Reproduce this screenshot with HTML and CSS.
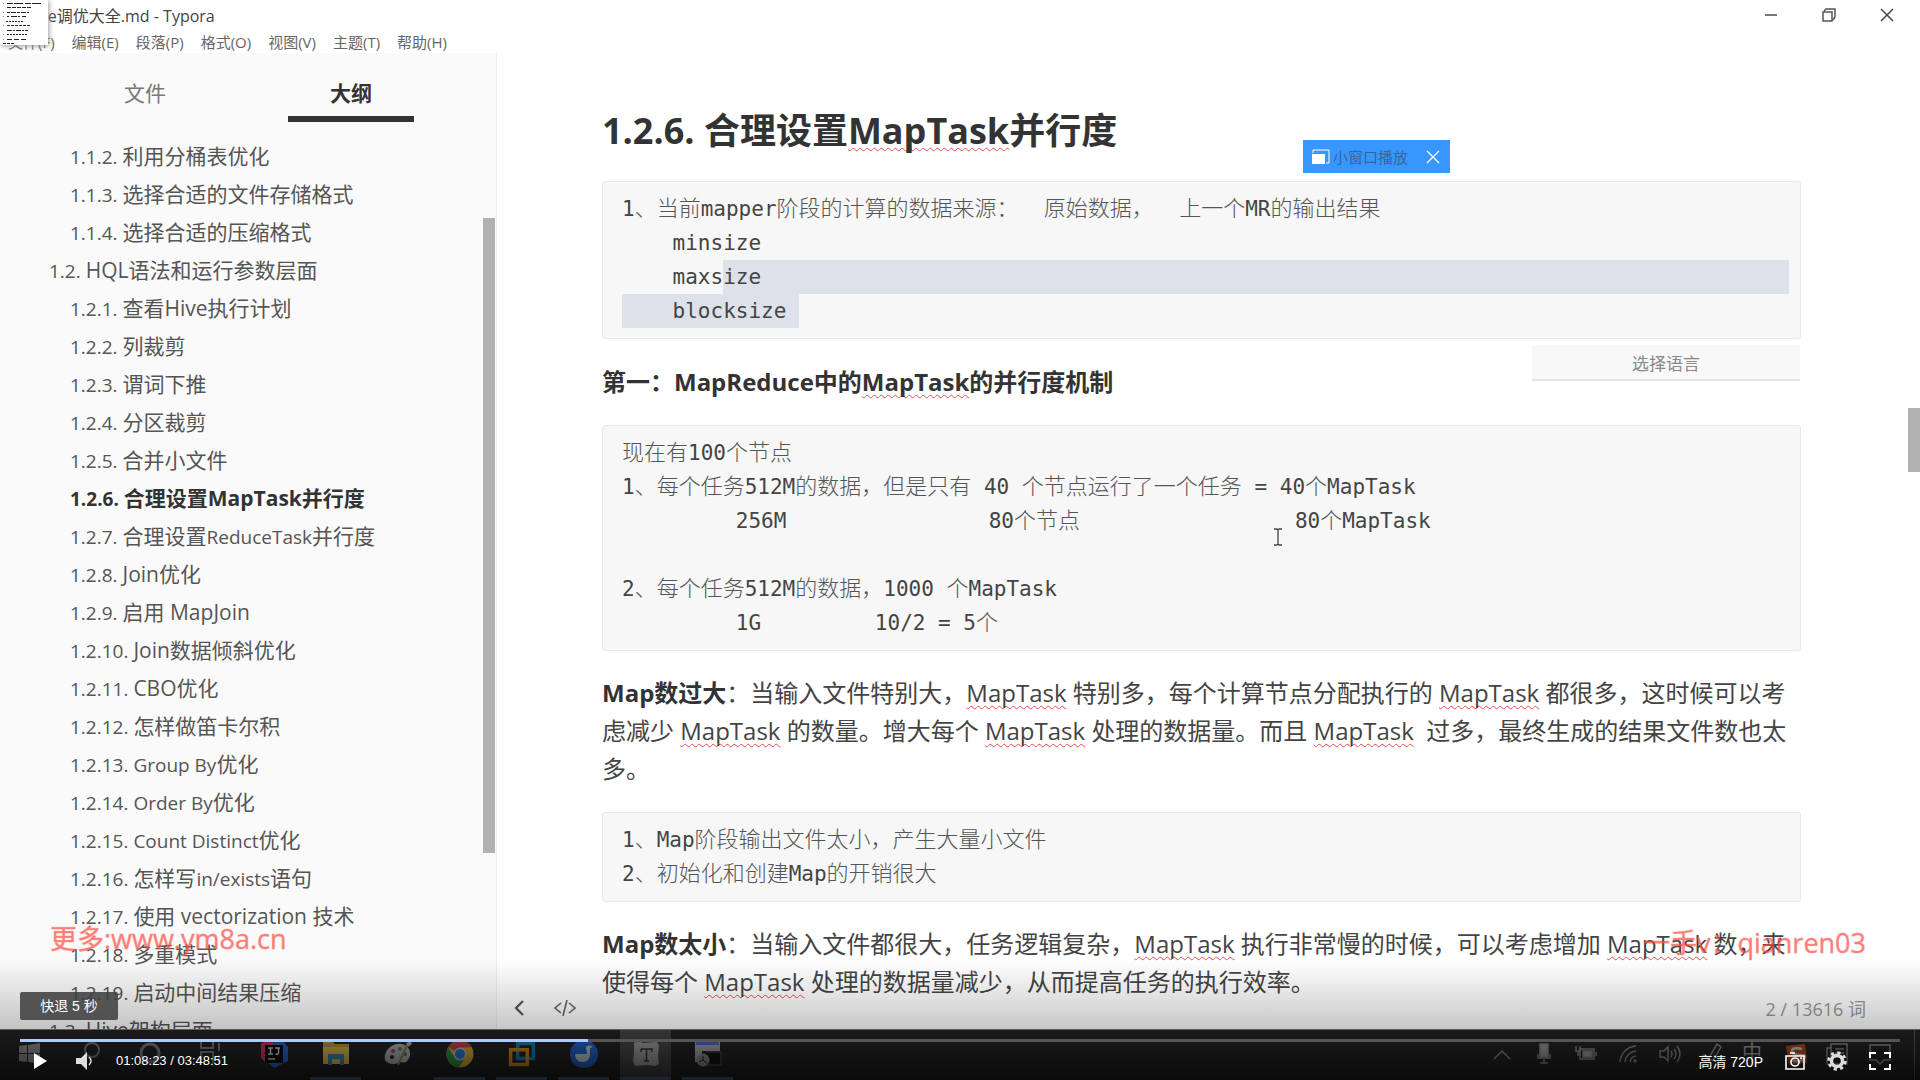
FILE: index.html
```
<!DOCTYPE html>
<html lang="zh-CN">
<head>
<meta charset="utf-8">
<title>Hive调优大全.md - Typora</title>
<link rel="stylesheet" href="styles.css">
</head>
<body>
<div class="player">
  <div class="app">
    <header class="titlebar">
      <h1 class="title">Hive调优大全.md - Typora</h1>
      <div class="winbtns">
        <button aria-label="最小化"><svg width="14" height="14"><path d="M1 7h12" stroke="#777" stroke-width="2"/></svg></button>
        <button aria-label="还原"><svg width="14" height="14" fill="none" stroke="#555" stroke-width="1.500"><path d="M1 4h9v9H1zM2 3l2-2h9v8l-2 3"/></svg></button>
        <button aria-label="关闭"><svg width="14" height="14"><path d="M1 1l12 12M13 1L1 13" stroke="#444" stroke-width="1.500"/></svg></button>
      </div>
    </header>
    <nav class="menubar">
      <button>文件(F)</button><button>编辑(E)</button><button>段落(P)</button><button>格式(O)</button><button>视图(V)</button><button>主题(T)</button><button>帮助(H)</button>
    </nav>
    <div class="workspace">
      <aside class="sidebar">
        <div class="tabs"><button class="tab">文件</button><button class="tab active"><span>大纲</span></button></div>
        <ul class="outline">
          <li><a href="#"><i>1.1.2. </i>利用分桶表优化</a></li>
          <li><a href="#"><i>1.1.3. </i>选择合适的文件存储格式</a></li>
          <li><a href="#"><i>1.1.4. </i>选择合适的压缩格式</a></li>
          <li class="lv2"><a href="#"><i>1.2. </i>HQL语法和运行参数层面</a></li>
          <li><a href="#"><i>1.2.1. </i>查看Hive执行计划</a></li>
          <li><a href="#"><i>1.2.2. </i>列裁剪</a></li>
          <li><a href="#"><i>1.2.3. </i>谓词下推</a></li>
          <li><a href="#"><i>1.2.4. </i>分区裁剪</a></li>
          <li><a href="#"><i>1.2.5. </i>合并小文件</a></li>
          <li class="current"><a href="#"><i>1.2.6. </i>合理设置MapTask并行度</a></li>
          <li><a href="#"><i>1.2.7. </i>合理设置<i>ReduceTask</i>并行度</a></li>
          <li><a href="#"><i>1.2.8. </i>Join优化</a></li>
          <li><a href="#"><i>1.2.9. </i>启用 MapJoin</a></li>
          <li><a href="#"><i>1.2.10. </i>Join数据倾斜优化</a></li>
          <li><a href="#"><i>1.2.11. </i>CBO优化</a></li>
          <li><a href="#"><i>1.2.12. </i>怎样做笛卡尔积</a></li>
          <li><a href="#"><i>1.2.13. </i><i>Group By</i>优化</a></li>
          <li><a href="#"><i>1.2.14. </i><i>Order By</i>优化</a></li>
          <li><a href="#"><i>1.2.15. </i><i>Count Distinct</i>优化</a></li>
          <li><a href="#"><i>1.2.16. </i>怎样写<i>in/exists</i>语句</a></li>
          <li><a href="#"><i>1.2.17. </i>使用 vectorization 技术</a></li>
          <li><a href="#"><i>1.2.18. </i>多重模式</a></li>
          <li><a href="#"><i>1.2.19. </i>启动中间结果压缩</a></li>
          <li class="lv2"><a href="#"><i>1.3. </i>Hive架构层面</a></li>
        </ul>
        <div class="side-thumb"></div>
      </aside>
      <main class="editor">
        <article class="doc">
          <h2>1.2.6. 合理设置<u>MapTask</u>并行度</h2>
          <div class="fence">
<pre><i>1</i>、当前<i>mapper</i>阶段的计算的数据来源：<i>  </i>原始数据，<i>  </i>上一个<i>MR</i>的输出结果</pre>
<pre><i>    minsize</i></pre>
<pre class="sel-rest"><i>    maxs</i><mark><i>ize</i></mark></pre>
<pre><mark class="sel"><i>    blocksize </i></mark></pre>
            <button class="lang">选择语言</button>
          </div>
          <h3>第一：MapReduce中的<u>MapTask</u>的并行度机制</h3>
          <div class="fence">
<pre>现在有<i>100</i>个节点</pre>
<pre><i>1</i>、每个任务<i>512M</i>的数据，但是只有<i> 40 </i>个节点运行了一个任务<i> = 40</i>个<i>MapTask</i></pre>
<pre><i>         256M                80</i>个节点<i>                 80</i>个<i>MapTask</i></pre>
<pre> </pre>
<pre><i>2</i>、每个任务<i>512M</i>的数据，<i>1000 </i>个<i>MapTask</i></pre>
<pre><i>         1G         10/2 = 5</i>个</pre>
            <svg class="ibeam" width="8" height="18" fill="none" stroke="#444" stroke-width="1.300"><path d="M0 1h3l1 1 1-1h3M4 2v14M0 17h3l1-1 1 1h3"/></svg>
          </div>
          <p><strong>Map数过大</strong>：当输入文件特别大，<u>MapTask</u> 特别多，每个计算节点分配执行的 <u>MapTask</u> 都很多，这时候可以考虑减少 <u>MapTask</u> 的数量。增大每个 <u>MapTask</u> 处理的数据量。而且 <u>MapTask</u>&nbsp; 过多，最终生成的结果文件数也太多。</p>
          <div class="fence">
<pre><i>1</i>、<i>Map</i>阶段输出文件太小，产生大量小文件</pre>
<pre><i>2</i>、初始化和创建<i>Map</i>的开销很大</pre>
          </div>
          <p><strong>Map数太小</strong>：当输入文件都很大，任务逻辑复杂，<u>MapTask</u> 执行非常慢的时候，可以考虑增加 <u>MapTask</u> 数，来使得每个 <u>MapTask</u> 处理的数据量减少，从而提高任务的执行效率。</p>
        </article>
        <div class="status">
          <button aria-label="收起侧栏"><svg width="10" height="16" fill="none" stroke="#555" stroke-width="2.200"><path d="M9 1L2 8l7 7"/></svg></button>
          <button aria-label="源代码模式"><svg width="22" height="16" fill="none" stroke="#666" stroke-width="1.600"><path d="M7 3L1 8l6 5M15 3l6 5-6 5M13 0L9 16"/></svg></button>
          <span class="count">2 / 13616 词</span>
        </div>
        <div class="main-thumb"></div>
      </main>
    </div>
    <footer class="taskbar">
      <div class="apps">
        <span class="app-ic"><svg viewBox="0 0 28 28"><path d="M7 6l8-1v8H7zM16 5l12-2v10H16zM7 14h8v8l-8-1zM16 14h12v10l-12-2z" fill="#888"/></svg></span>
        <span class="app-ic"><svg viewBox="0 0 28 28" fill="none" stroke="#777" stroke-width="2"><circle cx="18" cy="10" r="7"/><path d="M13 15l-7 8"/></svg></span>
        <span class="app-ic"><svg viewBox="0 0 28 28" fill="none" stroke="#777" stroke-width="3"><circle cx="14" cy="13" r="9"/></svg></span>
        <span class="app-ic"><svg viewBox="0 0 28 28" fill="none" stroke="#777" stroke-width="2"><path d="M3 2v6h12V2M3 23V12h12v11M21 3v8M21 15v8"/></svg></span>
        <span class="app-ic"><svg viewBox="0 0 28 28"><path d="M1 3l12-3 2 8L7 24l-6-6z" fill="#c5345c"/><path d="M15 2l8-1 5 6v14l-14 7-7-6z" fill="#2860c8"/><path d="M5 5h18v18H5z" fill="#0c0c12"/><path d="M8 8h5M10.500 8v6M8 14h5M15 8h5M18.500 8v5q0 2-3 1M8 19h7" stroke="#ccc" stroke-width="1.500" fill="none"/></svg></span>
        <span class="app-ic run"><svg viewBox="0 0 28 28"><path d="M1 1h9l3 3h14v20H1z" fill="#b8923a"/><path d="M1 7h26v17H1z" fill="#d8b450"/><path d="M6 25V14h16v11h-4v-6h-8v6z" fill="#3b82aa"/></svg></span>
        <span class="app-ic"><svg viewBox="0 0 28 28"><path d="M1 20C-1 11 8 2 18 4c8 2 11 11 5 17-3 3-6 0-9 2-4 2-11 1-13-3z" fill="#aaacae"/><circle cx="9" cy="11" r="2" fill="#9d4040"/><circle cx="16" cy="9" r="2" fill="#3e8542"/><circle cx="21" cy="14" r="2" fill="#346fa0"/><circle cx="8" cy="17" r="2" fill="#222"/><path d="M14 25L24 3" stroke="#9b7446" stroke-width="2"/><path d="M22 4l4-4 2 4-4 3z" fill="#aaa"/></svg></span>
        <span class="app-ic run"><svg viewBox="0 0 28 28"><circle cx="14" cy="14" r="13.500" fill="#d0a834"/><path d="M14 14L2.300 7.200A13.500 13.500 0 0 1 25.700 7.200L14 7.500z" fill="#c0453b"/><path d="M2.300 7.200A13.500 13.500 0 0 0 13 27.500l6-10-11-1z" fill="#2b8c46"/><circle cx="14" cy="14" r="6.500" fill="#bbb"/><circle cx="14" cy="14" r="5" fill="#3470cc"/></svg></span>
        <span class="app-ic run"><svg viewBox="0 0 32 28" fill="none" stroke-width="4"><path d="M11 2h18v17H11z" stroke="#1a7ba8"/><path d="M3 9h19v17H3z" stroke="#cc8224"/></svg></span>
        <span class="app-ic run"><svg viewBox="0 0 28 28"><circle cx="14" cy="14" r="14" fill="#235fc4"/><path d="M5 14h12l-1-7q2-3 7 0l-3 1v6c0 11-15 11-15 0z" fill="#b5c7c7"/></svg></span>
        <span class="app-ic run focus"><svg viewBox="0 0 28 28"><path d="M2 3l4-2 5 2 14-1 2 4-1 9 1 9-4 2-8-1-12 1-2-5 1-9z" fill="#999"/><path d="M9 9h11v3M9 9v3M14.500 9v12M12 21h5" stroke="#333" stroke-width="1.500" fill="none"/></svg></span>
        <span class="app-ic run"><svg viewBox="0 0 28 28"><path d="M1 1h25v10H8v11H1z" fill="#a0a0a8"/><path d="M2 2h23v3H2z" fill="#4c68b0"/><path d="M12 12h15v13H13" fill="#141414" stroke="#555"/><circle cx="9" cy="20" r="6.500" fill="#888"/><path d="M9 16v4l-4 2M9 20l4 3" stroke="#222" fill="none"/></svg></span>
      </div>
      <div class="tray">
        <svg viewBox="0 0 24 24"><path d="M4 17l8-8 8 8"/></svg>
        <svg viewBox="0 0 24 24"><path d="M8 2h8v13H8z" fill="#999"/><path d="M6 12v4h12v-4M12 17v4M8 21h8"/></svg>
        <svg viewBox="0 0 24 24"><path d="M6 7h14v10H6z"/><path d="M9 9h9v6H9z" fill="#999"/><path d="M22 10v4M2 4v5h4V4M4 9v5"/></svg>
        <svg viewBox="0 0 24 24"><path d="M4 20A17 17 0 0 1 20 4M9 20A12 12 0 0 1 20 9M14 20a7 7 0 0 1 6-6"/><circle cx="19" cy="19" r="1"/></svg>
        <svg viewBox="0 0 24 24"><path d="M2 9h4l4-4v14l-4-4H2zM13 9q2 3 0 6M16 7q4 5 0 10M19 4q6 8 0 16"/></svg>
        <svg viewBox="0 0 24 24"><path d="M10 14l7-12 4 3-7 12-5 2zM2 14q3-3 5 1t-4 5"/></svg>
        <span class="ime">中</span>
        <svg viewBox="0 0 24 24"><path d="M2 4l19-2 2 19-18 2z" fill="#b84820" stroke="none"/><path d="M18 7q-10-2-10 2t9 4-1 6q-5 1-8-1" stroke="#ccc" stroke-width="2.500"/></svg>
        <svg viewBox="0 0 24 24"><path d="M5 2h16v20H1V6h4zM5 6v14M9 7h9M9 11h9M9 15h9"/></svg>
        <svg viewBox="0 0 24 24"><path d="M2 3h20v15h-6l-4 4-4-4H2z"/></svg>
      </div>
    </footer>
  </div>

  <div class="thumb-drag" aria-hidden="true"><svg width="46" height="44" fill="none" stroke-width="1"><g stroke="#222"><path d="M7 3.500h34" stroke-dasharray="6 1 9 2"/><path d="M7 7.500h24" stroke-dasharray="4 1"/><path d="M7 12.500h22" stroke-dasharray="3 1 5 1"/><path d="M7 16.500h19" stroke-dasharray="2 2 6 1"/><path d="M6 21.500h18" stroke-dasharray="2 1"/><path d="M7 25.500h24" stroke-dasharray="3 1"/><path d="M7 30.500h21" stroke-dasharray="5 1 2 1"/><path d="M7 34.500h20" stroke-dasharray="2 1"/><path d="M7 39.500h20" stroke-dasharray="5 2"/><path d="M3 43.500h12" stroke-dasharray="3 1"/></g><path d="M3 3.500h1M3 12.500h1M3 16.500h1M3 25.500h1M3 34.500h1M3 39.500h1" stroke="#b85"/></svg></div>
  <div class="popout"><button class="pop-go"><svg width="18" height="15"><path d="M1 4V1h16v13h-3" fill="none" stroke="#fff"/><path d="M0 5h13v10H0z" fill="#fff"/></svg>小窗口播放</button><button class="pop-x" aria-label="关闭"><svg width="14" height="14"><path d="M1 1l12 12M13 1L1 13" stroke="#fff" stroke-width="1.300"/></svg></button></div>
  <div class="mark mark-l">更多:www.ym8a.cn</div>
  <div class="mark mark-r">一手v：qianren03</div>

  <div class="overlay">
    <div class="tip">快退 5 秒</div>
    <div class="track"><div class="played" style="width:30.2%"></div></div>
    <div class="controls">
      <button class="play" aria-label="播放"><svg width="13" height="16"><path d="M0 0l13 8-13 8z" fill="#fff"/></svg></button>
      <button aria-label="音量"><svg width="18" height="18"><path d="M0 6h5l6-6v18l-6-6H0z" fill="#ddd"/><path d="M13 5q4 4 0 8" stroke="#ddd" stroke-width="1.500" fill="none"/></svg></button>
      <span class="time">01:08:23 / 03:48:51</span>
      <span class="spacer"></span>
      <button class="quality">高清 720P</button>
      <button aria-label="截图"><svg width="20" height="18" fill="none" stroke="#fff" stroke-width="1.600"><path d="M1 4h18v13H1zM5 1h5"/><circle cx="10" cy="10" r="4"/><path d="M15 6h2"/></svg></button>
      <button aria-label="设置"><svg width="20" height="20" viewBox="0 0 20 20" fill="none" stroke="#ddd"><circle cx="10" cy="10" r="5.500" stroke-width="3.500"/><circle cx="10" cy="10" r="8.300" stroke-width="2.800" stroke-dasharray="3.260 3.260"/></svg></button>
      <button aria-label="全屏"><svg width="22" height="18" fill="none" stroke="#fff" stroke-width="2"><path d="M1 6V1h6M15 1h6v5M21 12v5h-6M7 17H1v-5"/></svg></button>
    </div>
  </div>
</div>
</body>
</html>
```
FILE: styles.css
```
* { box-sizing: border-box; }
body { margin: 0; background: #fff; color: #333; font-family: "Open Sans", "Noto Sans CJK SC", sans-serif; }
button { margin: 0; padding: 0; border: 0; background: none; color: inherit; font: inherit; }
i { font-style: normal; }
.player { position: relative; height: 100vh; overflow: hidden; }
.app { height: 100%; display: flex; flex-direction: column; }

.titlebar { display: flex; justify-content: space-between; align-items: center; height: 29px; padding: 0 24px 0 24px; color: #444; }
.title { margin: 0; font-size: 16px; font-weight: 400; }
.winbtns { display: flex; gap: 44px; padding-right: 2px; }
.winbtns button { display: flex; }
.menubar { display: flex; gap: 17px; height: 24px; padding-left: 8px; font-size: 15px; line-height: 26px; color: #666; }

.workspace { flex: 1; min-height: 0; display: flex; overflow: hidden; }
.sidebar { position: relative; width: 497px; flex: none; overflow: hidden; background: #fafafa; border-right: 1px solid #eee; font-size: 21px; color: #555; }
.tabs { display: flex; gap: 80px; padding-left: 82px; height: 84px; }
.tab { width: 126px; height: 69px; padding-top: 8px; color: #777; }
.tab.active { font-weight: 700; color: #333; border-bottom: 6px solid #333; padding-top: 14px; }
.outline { list-style: none; margin: 0; padding: 0 0 0 70px; }
.outline li { height: 38px; line-height: 38px; white-space: nowrap; }
.outline a { color: inherit; text-decoration: none; }
.outline i { font-size: 19px; white-space: pre; }
.outline .lv2 { margin-left: -21px; }
.outline .current { font-weight: 700; color: #333; }
.side-thumb { position: absolute; right: 1px; top: 165px; width: 12px; height: 635px; background: #b1b1b1; }

.editor { position: relative; flex: 1; min-width: 0; overflow: hidden; }
.doc { padding: 56px 119px 0 105px; font-size: 24px; line-height: 38px; color: #444; }
h2 { margin: 0 0 28px; font-size: 36px; line-height: 44px; color: #333; }
h3 { margin: 24px 0; font-size: 24px; line-height: 38px; color: #333; }
p { margin: 23px 0 24px; }
strong { color: #333; }
u { text-decoration: underline wavy #e05050 1px; text-underline-offset: 3px; text-decoration-skip-ink: none; }
.fence { position: relative; padding: 10px 11px 10px 19px; border: 1px solid #e9e9e9; border-radius: 3px; background: #f7f7f7; }
.fence pre { margin: 0; height: 34px; font: 300 22px/34px "DejaVu Sans Mono", "Noto Sans CJK SC", monospace; color: #555; }
.fence i { font-size: 21px; font-weight: 400; color: #444; }
mark { background: #dde2ea; color: inherit; }
.sel-rest { display: flex; }
.sel-rest mark { flex: 1; }
.sel { display: inline-block; height: 34px; }
.lang { position: absolute; right: 0; top: calc(100% + 7px); width: 268px; height: 36px; background: #f8f8f8; border-bottom: 2px solid #e4e4e4; font-size: 17px; color: #888; }
.ibeam { position: absolute; left: 671px; top: 102px; }
.status { position: absolute; left: 17px; right: 54px; bottom: 7px; display: flex; align-items: center; gap: 30px; height: 28px; }
.status button { display: flex; }
.count { margin-left: auto; font-size: 18px; color: #999; }
.main-thumb { position: absolute; right: 0; top: 355px; width: 12px; height: 64px; background: #b1b1b1; }

.taskbar { display: flex; justify-content: space-between; height: 51px; background: #222; border-top: 1px solid #777; }
.apps { display: flex; }
.app-ic { width: 51px; margin: 0 6px 0 5px; padding-top: 10px; text-align: center; border-bottom: 3px solid transparent; }
.app-ic:first-child { margin-left: 0; }
.app-ic svg { width: 28px; height: 28px; }
.app-ic.run { border-color: #516b88; }
.app-ic.focus { background: #444; }
.tray { display: flex; gap: 18px; margin-right: 5px; padding: 12px 22px 0 0; border-right: 1px solid #555; }
.tray svg { width: 24px; height: 24px; fill: none; stroke: #888; stroke-width: 1.5; }
.ime { width: 24px; font-size: 20px; line-height: 22px; color: #999; }

.thumb-drag { position: absolute; left: 0; top: 0; width: 48px; height: 45px; background: #fff; box-shadow: 1px 1px 5px #999; }
.popout { position: absolute; left: 1303px; top: 140px; width: 147px; height: 33px; display: flex; justify-content: space-between; align-items: center; padding: 0 10px 0 9px; background: #3797ff; }
.popout button { display: flex; align-items: center; gap: 3px; font-size: 15px; color: #35669a; }
.mark { position: absolute; color: #ff4a40; opacity: .7; font-size: 27px; line-height: 36px; white-space: nowrap; -webkit-text-stroke: 1px rgba(255,74,64,.4); }
.mark-l { left: 50px; bottom: 123px; }
.mark-r { right: 54px; bottom: 119px; }

.overlay { position: absolute; left: 0; right: 0; bottom: 0; height: 150px; padding: 62px 20px 0; background: linear-gradient(transparent 20%, rgba(0,0,0,.22) 66%, rgba(0,0,0,.7)); }
.tip { width: 98px; height: 28px; border-radius: 2px; background: rgba(60,60,60,.85); color: #fff; font: 14px/28px "Liberation Sans", "Noto Sans CJK SC", sans-serif; text-align: center; }
.track { height: 3px; margin-top: 19px; background: #555; }
.played { height: 3px; background: #a9cdf8; }
.controls { display: flex; align-items: center; gap: 22px; height: 37px; padding: 0 9px 0 14px; color: #fff; font: 13px "Liberation Sans", "Noto Sans CJK SC", sans-serif; }
.controls button { display: flex; }
.play { margin-right: 7px; }
.spacer { flex: 1; }
.quality { font-size: 14px; }
```
